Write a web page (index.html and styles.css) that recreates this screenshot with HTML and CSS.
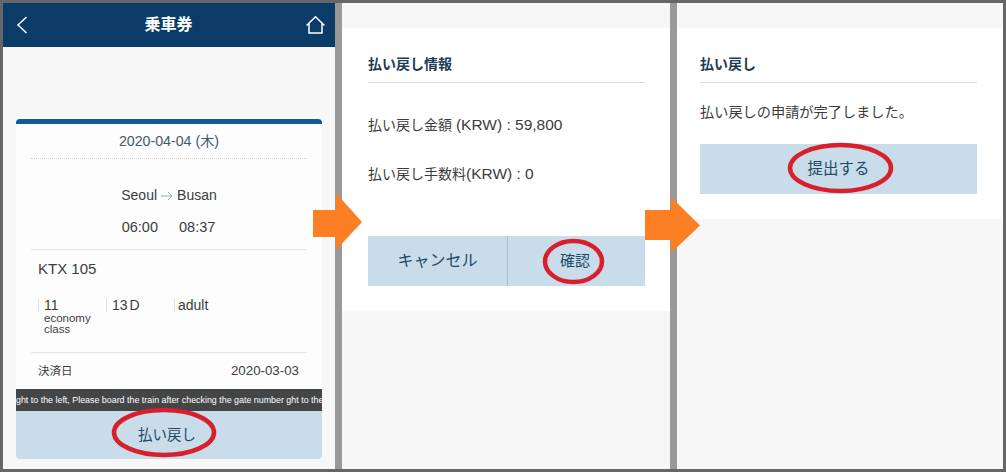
FILE: index.html
```html
<!DOCTYPE html>
<html lang="ja">
<head>
<meta charset="UTF-8">
<meta name="viewport" content="width=device-width, initial-scale=1.0">
<link rel="stylesheet" href="styles.css">
<title>払い戻し</title>
</head>
<body>
<div class="frame">
  <!-- step 1: ticket -->
  <div class="panel panel-ticket">
    <div class="topbar">
      <svg class="back-icon" width="12" height="18" viewBox="0 0 12 18"><path d="M10.5 1 L2 9 L10.5 17" fill="none" stroke="#fff" stroke-width="1.5"/></svg>
      <span class="topbar-title">乗車券</span>
      <svg class="home-icon" width="19" height="18" viewBox="0 0 19 18"><path d="M0.5 9.5 L9.5 0.8 L18.5 9.5 M3 7.5 V17 H16 V7.5" fill="none" stroke="#fff" stroke-width="1.5"/></svg>
    </div>
    <div class="ticket">
      <div class="ticket-date">2020-04-04 (木)</div>
      <div class="route">
        <div class="route-line">Seoul<svg class="route-arrow" width="12" height="10" viewBox="0 0 12 10"><path d="M0 5 H11 M7 1 L11 5 L7 9" fill="none" stroke="#8fb0ae" stroke-width="1"/></svg>Busan</div>
        <div class="route-times"><span>06:00</span><span>08:37</span></div>
      </div>
      <div class="train">
        <div class="train-name">KTX 105</div>
        <div class="seats">
          <div class="seat seat-car">11<div class="seat-note">economy<br>class</div></div>
          <div class="seat seat-no">13 D</div>
          <div class="seat seat-type">adult</div>
        </div>
      </div>
      <div class="paid">
        <span class="paid-label">決済日</span>
        <span>2020-03-03</span>
      </div>
      <div class="ticker">ght to the left, Please board the train after checking the gate number ght to the</div>
      <div class="action action-ticket">払い戻し</div>
    </div>
  </div>

  <!-- step 2: refund info -->
  <div class="panel panel-info">
    <div class="sheet sheet-info">
      <div class="sheet-title">払い戻し情報</div>
      <p class="info-row info-first">払い戻し金額 <span class="info-num">(KRW) : 59,800</span></p>
      <p class="info-row info-second">払い戻し手数料<span class="info-num">(KRW) : 0</span></p>
      <div class="actions">
        <div class="action action-cancel">キャンセル</div>
        <div class="action action-ok">確認</div>
      </div>
    </div>
  </div>

  <!-- step 3: done -->
  <div class="panel panel-done">
    <div class="sheet sheet-done">
      <div class="sheet-title">払い戻し</div>
      <p class="done-text">払い戻しの申請が完了しました。</p>
      <div class="action action-done">提出する</div>
    </div>
  </div>

  <svg class="arrow arrow-one" width="50" height="58" viewBox="0 0 50 58"><path d="M0 17 H23 V0 L49 29 L23 57 V44 H0 Z" fill="#fd7f23"/></svg>
  <svg class="arrow arrow-two" width="56" height="60" viewBox="0 0 56 60"><path d="M0 15 H26 V2 L55 30.5 L26 58 V45 H0 Z" fill="#fd7f23"/></svg>

  <svg class="oval oval-one" width="106" height="51" viewBox="0 0 106 51"><ellipse cx="53" cy="25.5" rx="50" ry="22.5" fill="none" stroke="#d8202c" stroke-width="4.5"/></svg>
  <svg class="oval oval-two" width="63" height="47" viewBox="0 0 63 47"><ellipse cx="31.5" cy="23.5" rx="28.5" ry="20.5" fill="none" stroke="#d8202c" stroke-width="4.5"/></svg>
  <svg class="oval oval-three" width="107" height="52" viewBox="0 0 107 52"><ellipse cx="53.5" cy="26" rx="50.5" ry="23" fill="none" stroke="#d8202c" stroke-width="4.5"/></svg>
</div>
</body>
</html>
```

FILE: styles.css
```css
html, body {
  margin: 0;
  padding: 0;
}
body {
  font-family: "Liberation Sans", "Noto Sans CJK JP", sans-serif;
  color: #3c3c3c;
}
.frame {
  position: relative;
  display: flex;
  gap: 7px;
  box-sizing: border-box;
  width: 1006px;
  height: 472px;
  overflow: hidden;
  border: 3px solid #666;
  background: #999;
}
.panel {
  background: #f7f7f8;
}
.panel-ticket {
  width: 332px;
}
.panel-info {
  width: 328px;
  padding-top: 25px;
}
.panel-done {
  flex: 1;
  padding-top: 25px;
}

/* ticket */
.topbar {
  display: flex;
  align-items: center;
  justify-content: space-between;
  height: 44px;
  padding: 0 10px 0 13px;
  background: #0b3c68;
}
.topbar-title {
  margin: 0 0 4px 3px;
  color: #fff;
  font-size: 16px;
  font-weight: bold;
}
.ticket {
  display: flex;
  flex-direction: column;
  height: 335px;
  margin: 72px 13px 0;
  border-top: 5px solid #125a8f;
  border-radius: 4px;
  background: #fdfdfe;
  font-size: 14px;
}
.ticket-date {
  margin: 0 15px;
  padding: 9px 0;
  border-bottom: 1px dotted #ccc;
  font-size: 14.2px;
  line-height: 16px;
  text-align: center;
  color: #3f5a70;
}
.route {
  margin: 0 15px;
  padding-top: 26px;
  height: 64px;
  border-bottom: 1px solid #e4e6e8;
  text-align: center;
}
.route-line {
  display: flex;
  align-items: center;
  justify-content: center;
  line-height: 20px;
}
.route-arrow {
  margin: 1px 4px 0;
}
.route-times {
  display: flex;
  justify-content: center;
  gap: 21px;
  margin: 12px 0 0 -1px;
  font-size: 14.5px;
  line-height: 20px;
}
.train {
  margin: 0 15px;
  height: 102px;
  border-bottom: 1px solid #e4e6e8;
}
.train-name {
  padding: 9px 7px 0;
  font-size: 15px;
  line-height: 20px;
}
.seats {
  display: flex;
  margin-top: 19px;
  padding-left: 7px;
  line-height: 14px;
}
.seat {
  width: 68px;
  padding-left: 5px;
  box-sizing: border-box;
  border-left: 1px solid #e2e2e2;
  height: 14px;
}
.seat-no {
  word-spacing: -2px;
}
.seat-type {
  padding-left: 3px;
}
.seat-note {
  margin-top: 1px;
  font-size: 11.5px;
  line-height: 11px;
}
.paid {
  display: flex;
  justify-content: space-between;
  padding: 9px 23px 0 22px;
  height: 27px;
  font-size: 13.3px;
  line-height: 18px;
}
.paid-label {
  font-size: 11.5px;
}
.ticker {
  height: 22px;
  background: #444547;
  color: #fff;
  font-size: 8.9px;
  line-height: 22px;
  text-align: center;
  white-space: nowrap;
}

/* sheets */
.sheet {
  box-sizing: border-box;
  background: #fff;
  padding: 27px 25px 0 26px;
}
.sheet-info {
  height: 283px;
}
.sheet-done {
  height: 191px;
  padding-left: 23px;
  padding-right: 26px;
}
.sheet-title {
  height: 27px;
  border-bottom: 1px solid #d8dde0;
  color: #1e3c55;
  font-size: 14px;
  font-weight: bold;
  line-height: 19px;
}
.info-row {
  margin: 0;
  font-size: 14px;
  line-height: 20px;
}
.info-num {
  font-size: 15.5px;
}
.info-first {
  padding-top: 32px;
}
.info-second {
  padding-top: 29px;
}
.done-text {
  margin: 0;
  padding-top: 19px;
  font-size: 14.2px;
  line-height: 20px;
}

/* buttons */
.action {
  display: flex;
  align-items: center;
  justify-content: center;
  box-sizing: border-box;
  padding-bottom: 4px;
  background: #c9dcea;
  color: #1f4a66;
}
.action-ticket {
  flex: 1;
  padding-right: 4px;
  border-radius: 0 0 4px 4px;
  font-size: 14.5px;
}
.actions {
  display: flex;
  height: 50px;
  margin-top: 52px;
}
.action-cancel {
  width: 140px;
  border-right: 1px solid #b0bfca;
  font-size: 16px;
}
.action-ok {
  flex: 1;
  padding-right: 3px;
  font-size: 15px;
}
.action-done {
  height: 50px;
  margin-top: 22px;
  font-size: 15.5px;
}

/* annotations over the screenshots */
.arrow, .oval {
  position: absolute;
}
.arrow-one {
  left: 310px;
  top: 190px;
}
.arrow-two {
  left: 642px;
  top: 192px;
}
.oval-one {
  left: 108px;
  top: 404px;
}
.oval-two {
  left: 539px;
  top: 235px;
}
.oval-three {
  left: 784px;
  top: 139px;
}
```
